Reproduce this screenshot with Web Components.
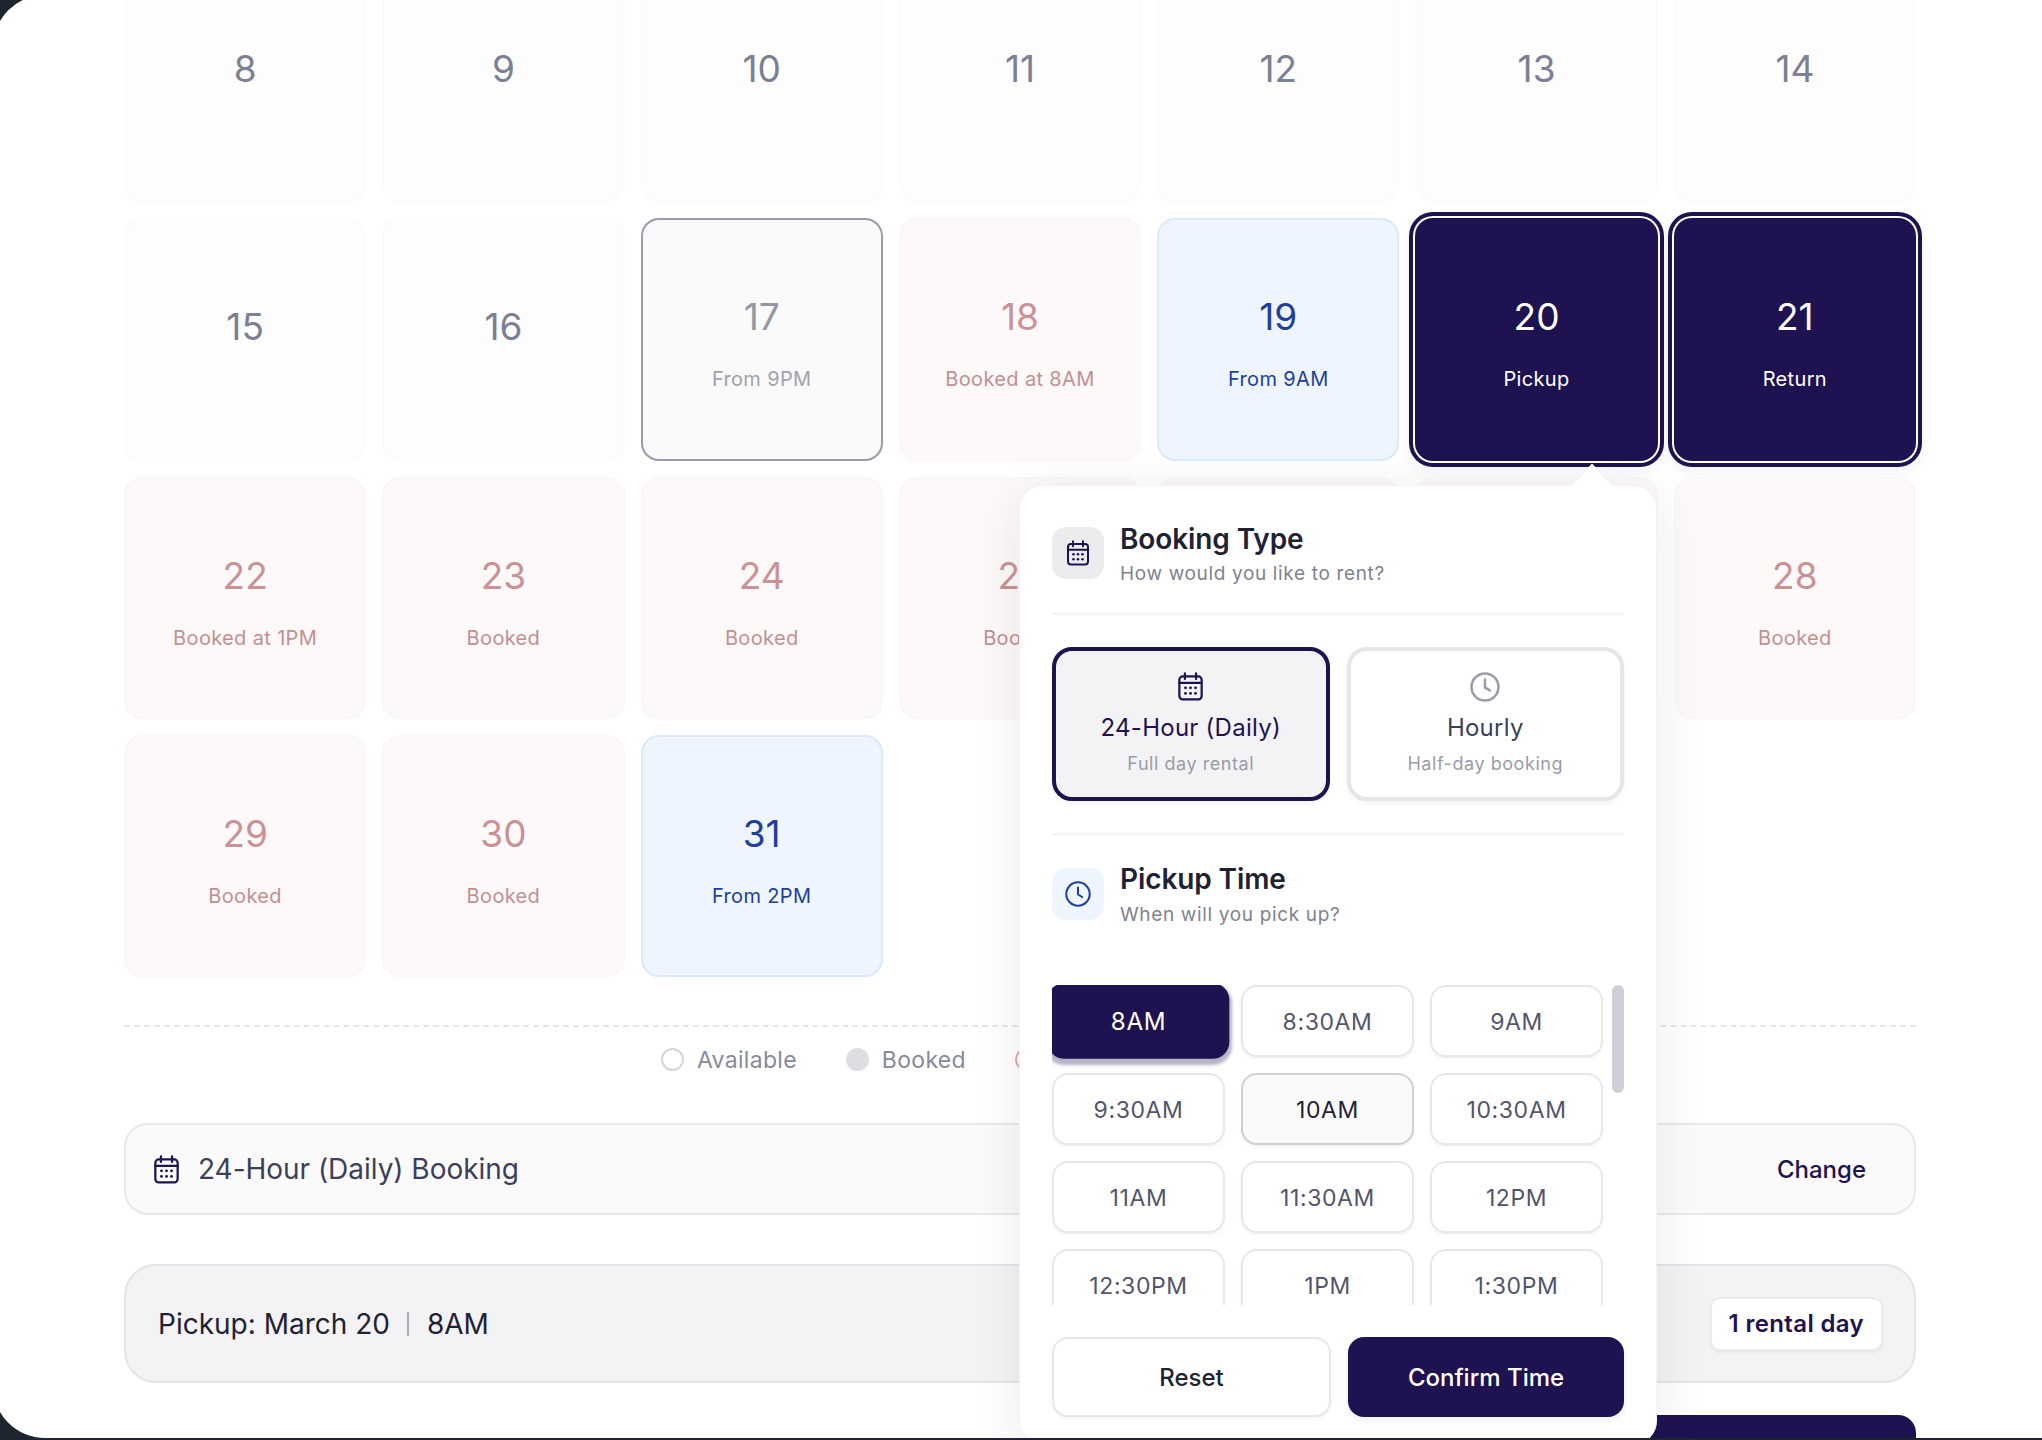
<!DOCTYPE html>
<html lang="en"><head><meta charset="utf-8"><title>Booking</title>
<style>
html,body{margin:0;padding:0;background:#1e2430;width:2042px;height:1440px;overflow:hidden}
body{font-family:Inter,"Liberation Sans",sans-serif}
</style></head><body>
<booking-app>
  <day-grid>
    <day-cell n="8"></day-cell><day-cell n="9"></day-cell><day-cell n="10"></day-cell><day-cell n="11"></day-cell><day-cell n="12"></day-cell><day-cell n="13"></day-cell><day-cell n="14"></day-cell>
    <day-cell n="15"></day-cell><day-cell n="16"></day-cell>
    <day-cell n="17" label="From 9PM" kind="limit"></day-cell>
    <day-cell n="18" label="Booked at 8AM" kind="booked"></day-cell>
    <day-cell n="19" label="From 9AM" kind="open"></day-cell>
    <day-cell n="20" label="Pickup" kind="sel"></day-cell>
    <day-cell n="21" label="Return" kind="sel"></day-cell>
    <day-cell n="22" label="Booked at 1PM" kind="booked"></day-cell>
    <day-cell n="23" label="Booked" kind="booked"></day-cell>
    <day-cell n="24" label="Booked" kind="booked"></day-cell>
    <day-cell n="25" label="Booked" kind="booked"></day-cell>
    <day-cell kind="booked"></day-cell>
    <day-cell kind="booked"></day-cell>
    <day-cell n="28" label="Booked" kind="booked"></day-cell>
    <day-cell n="29" label="Booked" kind="booked"></day-cell>
    <day-cell n="30" label="Booked" kind="booked"></day-cell>
    <day-cell n="31" label="From 2PM" kind="open"></day-cell>
  </day-grid>
  <cal-legend></cal-legend>
  <mode-bar></mode-bar>
  <summary-bar></summary-bar>
  <next-button></next-button>
  <booking-popover slot="over">
    <section-head slot="type" title="Booking Type" sub="How would you like to rent?" tone="gray"></section-head>
    <type-option slot="opts" active label="24-Hour (Daily)" sub="Full day rental" icon="cal"></type-option>
    <type-option slot="opts" label="Hourly" sub="Half-day booking" icon="clock"></type-option>
    <section-head slot="time" title="Pickup Time" sub="When will you pick up?" tone="blue"></section-head>
    <time-chip slot="times" state="sel">8AM</time-chip><time-chip slot="times">8:30AM</time-chip><time-chip slot="times">9AM</time-chip>
    <time-chip slot="times">9:30AM</time-chip><time-chip slot="times" state="hover">10AM</time-chip><time-chip slot="times">10:30AM</time-chip>
    <time-chip slot="times">11AM</time-chip><time-chip slot="times">11:30AM</time-chip><time-chip slot="times">12PM</time-chip>
    <time-chip slot="times">12:30PM</time-chip><time-chip slot="times">1PM</time-chip><time-chip slot="times">1:30PM</time-chip>
  </booking-popover>
</booking-app>
<script>
const CAL=(w,h,c)=>`<svg width="${w}" height="${h}" viewBox="0 0 24 26" fill="none" stroke="${c}" stroke-width="2" stroke-linecap="round" style="display:block"><rect x="2" y="4" width="20" height="20.5" rx="3"/><path d="M7 1.2v5M17 1.2v5M2 9.8h20"/><g fill="${c}" stroke="none"><circle cx="7.5" cy="14.2" r="1.3"/><circle cx="12" cy="14.2" r="1.3"/><circle cx="16.5" cy="14.2" r="1.3"/><circle cx="7.5" cy="19.2" r="1.3"/><circle cx="12" cy="19.2" r="1.3"/><circle cx="16.5" cy="19.2" r="1.3"/></g></svg>`;
const CLOCK=(s,c,sw=2)=>`<svg width="${s}" height="${s}" viewBox="0 0 26 26" fill="none" stroke="${c}" stroke-width="${sw}" stroke-linecap="round" stroke-linejoin="round" style="display:block"><circle cx="13" cy="13" r="11.7"/><path d="M13 6.5V13.5L17.2 16"/></svg>`;
const NAVY='#1f1250';
function def(name,css,html){
  customElements.define(name,class extends HTMLElement{
    connectedCallback(){
      if(this.shadowRoot)return;
      const r=this.attachShadow({mode:'open'});
      r.innerHTML=`<style>${css}</style>`+(typeof html==='function'?html(this):html);
    }
  });
}
def('booking-app',`
  :host{display:block;width:2042px;height:1440px;overflow:hidden;background:#1e2430;color:#1f2233;font-family:Inter,"Liberation Sans",sans-serif}
  .panel{position:relative;box-sizing:border-box;width:2100px;height:1443px;margin:-5px 0 0 -7px;background:#fff;border-radius:52px 0 0 52px;overflow:hidden;padding-left:131px}
  .col{width:1792px;display:flex;flex-direction:column;margin-top:-35px}
  .over{position:absolute;left:1026px;top:490px}
`,`<div class="panel"><div class="col"><slot></slot></div><div class="over"><slot name="over"></slot></div></div>`);
def('day-grid',`:host{display:grid;grid-template-columns:repeat(7,1fr);gap:16px}`,`<slot></slot>`);
def('day-cell',`
  :host{display:flex;box-sizing:border-box;aspect-ratio:1/1;min-width:0;border-radius:18px;border:2px solid #fcfcfc;background:#fdfdfd;flex-direction:column;align-items:center;justify-content:center;padding-bottom:24px;color:#7c8094;box-shadow:0 1px 2px rgba(0,0,0,.01)}
  :host([label]){padding-bottom:0;padding-top:8px}
  .n{font-size:37px;line-height:44px;font-weight:400;white-space:nowrap}
  .l{font-size:20px;line-height:24px;margin-top:28px;letter-spacing:.35px;white-space:nowrap}
  :host([kind=booked]){background:#fdf9f9;border-color:#fcf7f7;color:#c99396}
  :host([kind=booked]) .l{color:#c19093}
  :host([kind=limit]){background:#fafafa;border-color:#9a9bab;color:#9497a6}
  :host([kind=limit]) .l{color:#a0a2ae}
  :host([kind=open]){background:#eef5ff;border-color:#dce9fb;color:#1e3f9b}
  :host([kind=sel]){background:${NAVY};border:0;color:#fff;box-shadow:0 0 0 2px #fff,0 0 0 6px ${NAVY},0 6px 14px 6px rgba(30,18,80,.05)}
`,h=>{const n=h.getAttribute('n'),l=h.getAttribute('label');return (n?`<div class="n">${n}</div>`:'')+(l?`<div class="l">${l}</div>`:'')});
def('cal-legend',`
  :host{display:flex;box-sizing:border-box;height:98px;margin-top:48px;border-top:2px dashed #e6e6ea;padding:0 0 0 537px;gap:49px;align-items:center;padding-bottom:31px;color:#878a9b;font-size:23px;letter-spacing:.3px}
  .i{display:flex;align-items:center;gap:13px}
  .d{width:23px;height:23px;box-sizing:border-box;border-radius:50%;border:2px solid #d4d4da;background:#fff}
  .d.b{background:#dddde1;border-color:#dfdfe3}
  .d.r{border-color:#e3a9a9}
`,`<div class="i"><span class="d"></span>Available</div><div class="i"><span class="d b"></span>Booked</div><div class="i"><span class="d r"></span></div>`);
def('mode-bar',`
  :host{display:flex;box-sizing:border-box;height:92px;margin-top:0;align-items:center;justify-content:space-between;border:2px solid #e8e8eb;border-radius:24px;background:#fafafb;padding:0 48px 0 27px}
  .l{display:flex;align-items:center;gap:18px;font-size:28px;font-weight:400;color:#3d3f58;letter-spacing:-.03px}
  .c{font-size:24px;font-weight:500;color:${NAVY}}
`,`<div class="l">${CAL(27,29,NAVY)}<span>24-Hour (Daily) Booking</span></div><div class="c">Change</div>`);
def('summary-bar',`
  :host{display:flex;box-sizing:border-box;height:119px;margin-top:49px;align-items:center;justify-content:space-between;border:2px solid #e5e5e9;border-radius:32px;background:#f3f3f5;padding:0 33px 0 32px}
  .l{display:flex;align-items:center;font-size:28px;font-weight:400;color:#1f2233}
  .s{width:2px;height:24px;background:#a9abb6;margin:0 18px 0 17px}
  .b{height:50px;box-sizing:border-box;padding:0 17px;display:flex;align-items:center;background:#fff;border-radius:8px;box-shadow:0 0 0 2px #ebebee,0 2px 3px 2px rgba(0,0,0,.05);font-size:24px;font-weight:600;letter-spacing:.35px;color:${NAVY}}
`,`<div class="l"><span>Pickup: March 20</span><span class="s"></span><span>8AM</span></div><div class="b">1 rental day</div>`);
def('next-button',`:host{display:block;height:90px;width:520px;align-self:flex-end;margin-top:32px;background:${NAVY};border-radius:18px}`,``);
def('booking-popover',`
  :host{display:block;position:relative;box-sizing:border-box;width:638px;height:960px;background:#fff;border:1px solid #f4f4f6;border-radius:24px;padding:41px 32px 0;box-shadow:0 10px 50px rgba(30,30,60,.09)}
  .arrow{position:absolute;left:557px;top:-16px;width:30px;height:30px;background:#fff;transform:rotate(45deg);border-left:1px solid #f1f1f4;border-top:1px solid #f1f1f4;box-sizing:border-box}
  hr{border:0;height:2px;background:#f4f4f6;margin:0}
  .opts{display:grid;grid-template-columns:1fr 1fr;gap:17px;margin:32px 0}
  .tw{display:flex;justify-content:space-between;margin-top:65px;height:320px}
  .ta{width:551px;height:320px;overflow:hidden}
  .tg{display:grid;grid-template-columns:repeat(3,173px);gap:16px 16px;grid-auto-rows:72px}
  .sb{width:12px;height:320px}
  .th{width:12px;height:108px;border-radius:6px;background:#cfced6}
  .bt{display:grid;grid-template-columns:279px 276px;gap:17px;margin-top:32px}
  .b{box-sizing:border-box;height:80px;border-radius:16px;display:flex;align-items:center;justify-content:center;font-size:24px;font-weight:500}
  .re{background:#fff;border:2px solid #e8e8eb;color:#1f2233;box-shadow:0 2px 3px rgba(0,0,0,.04)}
  .co{background:${NAVY};color:#fff;box-shadow:0 3px 6px rgba(0,0,0,.08)}
`,`<div class="arrow"></div><slot name="type"></slot><hr style="margin-top:34px"><div class="opts"><slot name="opts"></slot></div><hr><div style="margin-top:33px"><slot name="time"></slot></div>
<div class="tw"><div class="ta"><div class="tg"><slot name="times"></slot></div></div><div class="sb"><div class="th"></div></div></div>
<div class="bt"><div class="b re">Reset</div><div class="b co">Confirm Time</div></div>`);
def('section-head',`
  :host{display:flex;gap:16px;height:52px}
  .ic{width:52px;height:52px;border-radius:14px;display:flex;align-items:center;justify-content:center;flex:none;background:#ececef}
  :host([tone=blue]) .ic{background:#eff5ff}
  :host([tone=blue]) .t{margin-top:-6px}
  :host([tone=blue]) .s{margin-top:7px}
  .t{font-size:28px;line-height:34px;font-weight:600;color:#1f2233;margin-top:-5px;letter-spacing:-.1px}
  .s{font-size:19px;line-height:24px;color:#80828f;margin-top:6px;letter-spacing:.65px;white-space:nowrap}
`,h=>`<div class="ic">${h.getAttribute('tone')==='blue'?CLOCK(26,'#1e3f9b',2):CAL(24,26,NAVY)}</div><div><div class="t">${h.getAttribute('title')}</div><div class="s">${h.getAttribute('sub')}</div></div>`);
def('type-option',`
  :host{display:flex;flex-direction:column;align-items:center;box-sizing:border-box;height:154px;border:4px solid #e6e6ea;border-radius:20px;background:#fff;padding-top:21px;box-shadow:0 3px 5px rgba(0,0,0,.04);color:#3d3f58}
  :host([active]){border-color:${NAVY};background:#f3f3f6;color:${NAVY}}
  .ic{height:29px}
  .l{font-size:24px;line-height:30px;font-weight:400;margin-top:12px;letter-spacing:.25px;white-space:nowrap}
  .s{font-size:18px;line-height:22px;color:#9b9ca8;margin-top:10px;letter-spacing:.55px;white-space:nowrap}
`,h=>{const c=h.getAttribute('icon')==='cal';return `<div class="ic">${c?CAL(27,29,NAVY):CLOCK(30,'#9b9cab',2.2)}</div><div class="l">${h.getAttribute('label')}</div><div class="s">${h.getAttribute('sub')}</div>`});
def('time-chip',`
  :host{display:flex;box-sizing:border-box;align-items:center;justify-content:center;height:72px;padding-top:1px;border:2px solid #e8e8eb;border-radius:16px;background:#fff;font-size:23px;letter-spacing:.6px;color:#53556c;box-shadow:0 2px 3px rgba(0,0,0,.05)}
  :host([state=sel]){background:${NAVY};border-color:${NAVY};color:#fff;transform:scale(1.05);box-shadow:0 3px 3px 2px rgba(30,18,80,.32)}
  :host([state=hover]){background:#fafafa;border-color:#cfcfd6;color:#1f2233}
`,`<slot></slot>`);
</script>
</body></html>
